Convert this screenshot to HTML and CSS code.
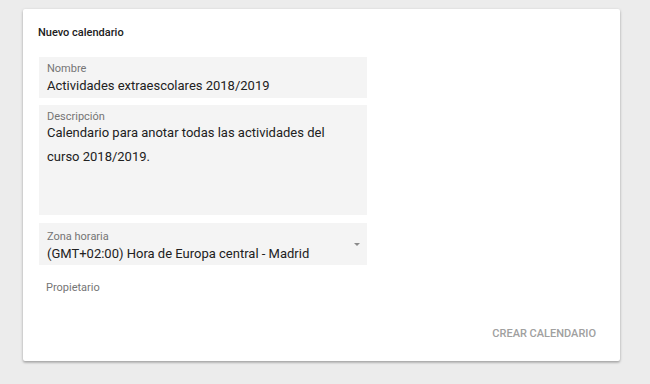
FILE: index.html
```html
<!DOCTYPE html>
<html lang="es">
<head>
  <meta charset="UTF-8" />
  <title>Nuevo calendario</title>
  <link rel="stylesheet" href="styles.css">
</head>
<body>
  <div class="Card">
    <div class="Title">Nuevo calendario</div>

    <div class="Field">
      <div class="Label">Nombre</div>
      <div class="Value">Actividades extraescolares 2018/2019</div>
    </div>

    <div class="Field area">
      <div class="Label">Descripción</div>
      <div class="Value">Calendario para anotar todas las actividades del curso 2018/2019.</div>
    </div>

    <div class="Field select">
      <div class="Label">Zona horaria</div>
      <div class="Value">(GMT+02:00) Hora de Europa central - Madrid</div>
      <span class="Arrow"></span>
    </div>

    <div class="Owner">Propietario</div>

    <div class="Actions">
      <button class="Flat">CREAR CALENDARIO</button>
    </div>
  </div>
</body>
</html>
```

FILE: styles.css
```css
* {
  margin: 0;
  padding: 0;
  box-sizing: border-box;
}
html, body {
  width: 100%;
  height: 100%;
  background-color: #ececec;
  font-family: Roboto, "Noto Sans", sans-serif;
}
body {
  padding: 9px 30px 0 23px;
}

.Card {
  display: flex;
  flex-direction: column;
  width: 597px;
  height: 352px;
  background: #fff;
  border-radius: 2px;
  box-shadow: 0 1px 3px rgba(0, 0, 0, 0.25), 0 2px 2px rgba(0, 0, 0, 0.12);
  padding: 17px 16px 0 15px;
}

.Title {
  font-size: 11px;
  font-weight: 500;
  line-height: 13px;
  color: #212121;
  margin-bottom: 18px;
}

.Field {
  position: relative;
  width: 328px;
  margin-left: 1px;
  background: #f4f4f4;
  padding: 6px 8px 2px;
  margin-bottom: 7px;
}

.Label {
  font-size: 11px;
  line-height: 12px;
  color: #757575;
}

.Value {
  font-size: 13px;
  line-height: 20px;
  color: #212121;
  margin-top: 1px;
}

.Field.area {
  height: 110px;
  margin-bottom: 8px;
}
.Field.area .Value {
  line-height: 24px;
  margin-top: -2px;
  padding-right: 10px;
}

.Field.select {
  height: 42px;
  padding-top: 8px;
}

.Arrow {
  position: absolute;
  right: 7px;
  top: 20px;
  border-left: 3px solid transparent;
  border-right: 3px solid transparent;
  border-top: 3px solid #8a8a8a;
}

.Owner {
  margin-top: 9px;
  margin-left: 8px;
  font-size: 11px;
  line-height: 14px;
  color: #757575;
}

.Actions {
  display: flex;
  justify-content: flex-end;
  margin-top: 32px;
  padding-right: 8px;
}

.Flat {
  border: none;
  background: none;
  font-family: inherit;
  font-size: 11px;
  font-weight: 500;
  color: #a0a0a0;
  letter-spacing: 0;
}
```
